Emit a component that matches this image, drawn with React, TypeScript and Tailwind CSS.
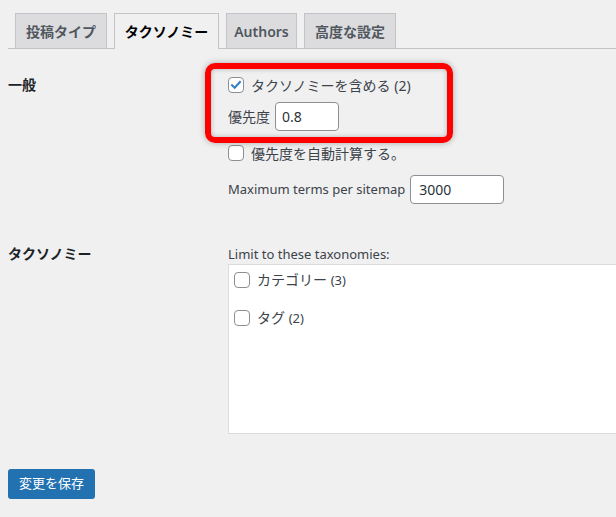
import React from "react";

const font = "font-['Noto_Sans','Noto_Sans_CJK_JP',sans-serif]";

function Check({ checked = false }: { checked?: boolean }) {
  return (
    <span className="flex h-4 w-4 shrink-0 items-center justify-center rounded-[4px] border border-[#8c8f94] bg-white">
      {checked && (
        <svg viewBox="0 0 16 16" className="h-[14px] w-[14px]">
          <path d="M3.5 8.2l3 3 6-6.6" fill="none" stroke="#3582c4" strokeWidth={2.4} strokeLinecap="square" />
        </svg>
      )}
    </span>
  );
}

const tabs = [
  { label: "投稿タイプ", w: "w-[92px]" },
  { label: "タクソノミー", w: "w-[105px]", active: true },
  { label: "Authors", w: "w-[71px]" },
  { label: "高度な設定", w: "w-[92px]" },
];

export default function App() {
  return (
    <div className={`min-h-screen w-[616px] overflow-hidden bg-[#f0f0f1] text-[13px] text-[#3c434a] ${font}`}>
      {/* Tabs */}
      <div className="ml-2 flex h-[49px] items-end border-b border-[#c3c4c7]">
        {tabs.map((t) =>
          t.active ? (
            <div
              key={t.label}
              className={`${t.w} ml-[7px] -mb-px flex h-[36px] items-center justify-center border border-b-0 border-[#c3c4c7] bg-[#f0f0f1] pb-px text-[14px] font-semibold text-black`}
            >
              {t.label}
            </div>
          ) : (
            <div
              key={t.label}
              className={`${t.w} ml-[7px] flex h-[35px] items-center justify-center border border-b-0 border-[#c3c4c7] bg-[#dcdcde] text-[14px] font-semibold text-[#50575e]`}
            >
              {t.label}
            </div>
          )
        )}
      </div>

      <div className="relative px-2">
        {/* 一般 */}
        <div className="flex pt-6">
          <div className="w-[220px] shrink-0 text-[14px] font-semibold leading-6 text-[#1d2327]">一般</div>
          <div className="flex flex-col">
            <label className="flex h-6 items-center gap-[7px]">
              <Check checked />
              <span className="text-[14px]">タクソノミーを含める (2)</span>
            </label>
            <div className="mt-[5px] flex items-center gap-[5px]">
              <span className="text-[14px]">優先度</span>
              <div className="flex h-[29px] w-[64px] items-center rounded-[4px] border border-[#8c8f94] bg-white px-[6px] text-[14px] text-[#2c3338]">
                0.8
              </div>
            </div>
            <label className="mt-[10px] flex h-6 items-center gap-[7px]">
              <Check />
              <span className="text-[14px]">優先度を自動計算する。</span>
            </label>
            <div className="mt-[10px] flex items-center gap-[5px]">
              <span className="text-[13px]">Maximum terms per sitemap</span>
              <div className="flex h-[29px] w-[94px] items-center rounded-[4px] border border-[#8c8f94] bg-white px-[8px] text-[14px] text-[#2c3338]">
                3000
              </div>
            </div>
          </div>
        </div>

        {/* タクソノミー */}
        <div className="mt-[40px] flex">
          <div className="w-[220px] shrink-0 text-[14px] font-semibold leading-5 text-[#1d2327]">タクソノミー</div>
          <div className="flex flex-col">
            <span className="h-5 text-[13px] leading-5">Limit to these taxonomies:</span>
            <div className="w-[420px] h-[170px] border border-[#dcdcde] bg-white px-[5px] pt-[3px]">
              <label className="flex h-6 items-center gap-[7px]">
                <Check />
                <span className="text-[14px]">
                  カテゴリー <span className="text-[13px]">(3)</span>
                </span>
              </label>
              <label className="mt-[14px] flex h-6 items-center gap-[7px]">
                <Check />
                <span className="text-[14px]">
                  タグ <span className="text-[13px]">(2)</span>
                </span>
              </label>
            </div>
          </div>
        </div>

        <button className="mt-[35px] h-[30px] w-[87px] rounded-[3px] bg-[#2271b1] text-[13px] text-white">変更を保存</button>

        {/* annotation */}
        <div className="pointer-events-none absolute left-[205px] top-[14px] h-[80px] w-[248px] rounded-[10px] border-[6px] border-[#ff0000] shadow-[0_0_6px_rgba(0,0,0,0.3),inset_0_0_5px_rgba(0,0,0,0.25)]" />
      </div>
    </div>
  );
}
